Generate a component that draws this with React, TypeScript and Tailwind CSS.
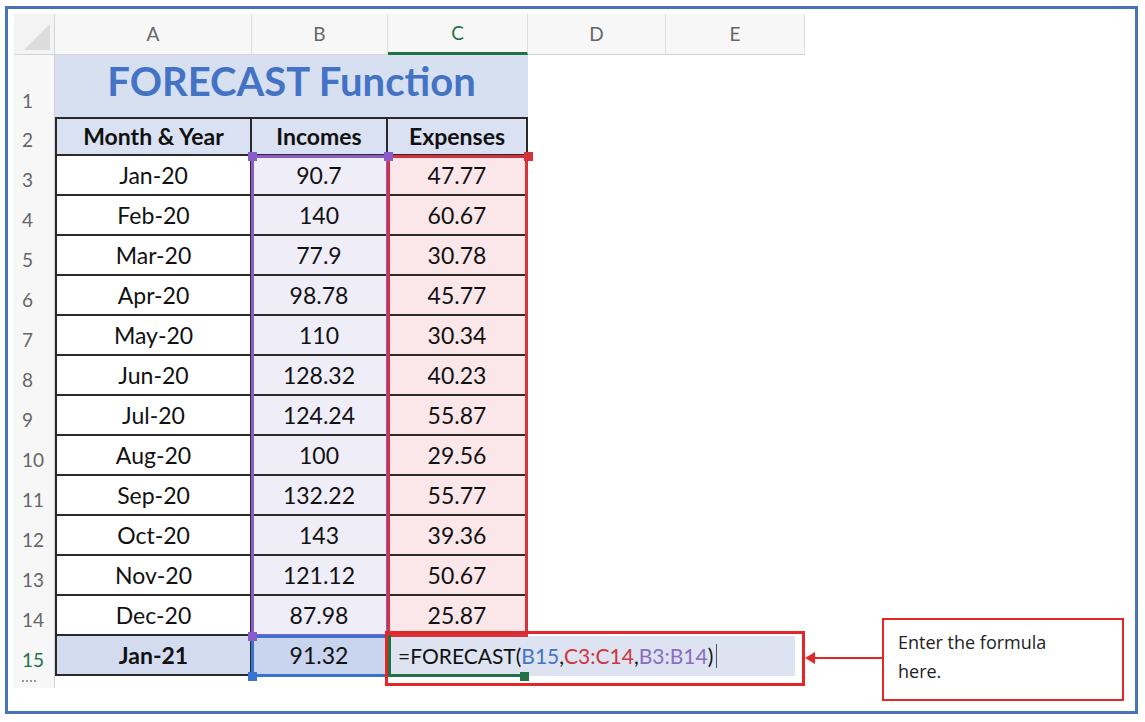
import React from "react";

const rows: [string, string, string][] = [
  ["Jan-20", "90.7", "47.77"],
  ["Feb-20", "140", "60.67"],
  ["Mar-20", "77.9", "30.78"],
  ["Apr-20", "98.78", "45.77"],
  ["May-20", "110", "30.34"],
  ["Jun-20", "128.32", "40.23"],
  ["Jul-20", "124.24", "55.87"],
  ["Aug-20", "100", "29.56"],
  ["Sep-20", "132.22", "55.77"],
  ["Oct-20", "143", "39.36"],
  ["Nov-20", "121.12", "50.67"],
  ["Dec-20", "87.98", "25.87"],
];

const rh = "flex items-end pl-[8px] pb-[2px] text-[19px] text-[#666] bg-[#f7f7f7] border-r border-[#d4d4d4]";
const cell = "flex items-center justify-center text-[23px] text-[#111] border-r-2 border-b-2 border-[#2a2a2a]";

function Handle({ x, y, c }: { x: number; y: number; c: string }) {
  return <div className={`absolute w-[9px] h-[9px] ${c}`} style={{ left: x - 4, top: y - 4 }} />;
}

export default function App() {
  return (
    <div className="w-[1145px] h-[722px] bg-white pt-[6px] pl-[5px]" style={{ fontFamily: "Lato, 'Open Sans', sans-serif" }}>
      <div className="w-[1133px] h-[708px] border-[3px] border-[#4a72b8] pt-[5px] pl-[6px]">
        <div className="relative w-[791px] h-[674px]">
          <div className="grid grid-cols-[41px_197px_136px_140px_138px_139px] grid-rows-[41px_62px_39px_repeat(13,40px)_12px]">
            <div className="bg-[#f3f3f3] border-r border-b border-[#d4d4d4] relative overflow-hidden">
              <div className="absolute right-[4px] bottom-[4px] w-0 h-0 border-l-[26px] border-l-transparent border-b-[26px] border-b-[#dcdcdc]" />
            </div>
            {["A", "B", "C", "D", "E"].map((l) => (
              <div key={l} className={`flex items-center justify-center text-[19px] bg-[#f7f7f7] border-r border-[#dedede] ${l === "C" ? "text-[#217346] border-b-[3px] border-b-[#217346]" : "text-[#666] border-b border-b-[#d4d4d4]"}`}>{l}</div>
            ))}
            <div className={rh}>1</div>
            <div className="col-span-3 bg-[#d6e0f1] flex items-end pb-[6px] justify-center text-[40px] font-bold text-[#4472c4]">FORECAST Function</div>
            <div /><div />
            <div className={rh}>2</div>
            {["Month & Year", "Incomes", "Expenses"].map((t, i) => (
              <div key={t} className={`${cell} bg-[#d9e1f2] font-bold text-[22px] border-t-2 ${i === 0 ? "border-l-2" : ""}`}>{t}</div>
            ))}
            <div /><div />
            {rows.map((r, i) => (
              <React.Fragment key={r[0]}>
                <div className={rh}>{i + 3}</div>
                <div className={`${cell} bg-white border-l-2`}>{r[0]}</div>
                <div className={`${cell} bg-[#efedf8]`}>{r[1]}</div>
                <div className={`${cell} bg-[#fbe6e9]`}>{r[2]}</div>
                <div /><div />
              </React.Fragment>
            ))}
            <div className={`${rh} !text-[#217346]`}>15</div>
            <div className={`${cell} bg-[#d3dcef] border-l-2 font-bold`}>Jan-21</div>
            <div className={`${cell} bg-[#c9d5ee] text-[20px]`}>91.32</div>
            <div className="col-span-3 bg-[#dde3f1] flex items-center pl-[10px] text-[21px] text-[#111] h-[40px] mr-[10px]">
              =FORECAST(<span className="text-[#4472c4]">B15</span>,<span className="text-[#d0343e]">C3:C14</span>,<span className="text-[#8b6cc4]">B3:B14</span>)
              <span className="inline-block w-px h-[24px] bg-[#555] ml-[3px]" />
            </div>
            <div className="bg-[#f7f7f7] border-r border-[#d4d4d4] relative">
              <div className="absolute left-[8px] top-[4px] w-[14px] border-t-2 border-dotted border-[#999]" />
            </div>
            <div /><div /><div /><div /><div />
          </div>

          <div className="absolute border-[3px] border-[#8a5cc8]" style={{ left: 237, top: 141, width: 138, height: 482 }} />
          <div className="absolute border-[3px] border-[#d6323c]" style={{ left: 373, top: 141, width: 141, height: 482 }} />
          <div className="absolute border-[3px] border-[#3a72d0]" style={{ left: 237, top: 621, width: 138, height: 42 }} />
          <div className="absolute border-l-[3px] border-b-[3px] border-[#217346]" style={{ left: 374, top: 621, width: 133, height: 42 }} />
          <Handle x={238} y={142} c="bg-[#8a5cc8]" />
          <Handle x={374} y={142} c="bg-[#8a5cc8]" />
          <Handle x={514} y={142} c="bg-[#d6323c]" />
          <Handle x={238} y={622} c="bg-[#8a5cc8]" />
          <Handle x={238} y={662} c="bg-[#3a72d0]" />
          <Handle x={510} y={662} c="bg-[#217346]" />
          <div className="absolute border-[3px] border-[#e32626]" style={{ left: 371, top: 617, width: 420, height: 55 }} />
          <div className="absolute h-[2px] bg-[#e32626]" style={{ left: 796, top: 643, width: 72 }} />
          <div className="absolute w-0 h-0 border-y-[6px] border-y-transparent border-r-[10px] border-r-[#e32626]" style={{ left: 791, top: 638 }} />
          <div className="absolute border-2 border-[#e32626] bg-white px-[14px] pt-[8px] text-[18px] leading-[29px] text-[#222]" style={{ left: 868, top: 604, width: 242, height: 83, fontFamily: "'Open Sans', sans-serif" }}>
            Enter the formula<br />here.
          </div>
        </div>
      </div>
    </div>
  );
}
